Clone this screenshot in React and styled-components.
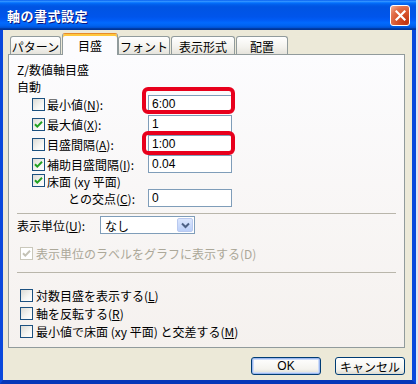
import React from 'react'
import styled, { createGlobalStyle } from 'styled-components'

const GlobalStyle = createGlobalStyle`
	html, body {
		margin: 0;
		padding: 0;
		background: #dde5f2;
	}
	body {
		font-family: "Liberation Sans", "Noto Sans CJK JP", sans-serif;
		font-size: 12px;
		color: #000;
	}
	* { box-sizing: border-box; }
`

const tabs = [
	{ label: 'パターン', width: 51, gap: 0 },
	{ label: '目盛', width: 56, gap: 1, active: true },
	{ label: 'フォント', width: 52, gap: 0 },
	{ label: '表示形式', width: 64, gap: 1 },
	{ label: '配置', width: 52, gap: 1 },
]

const Check = ({ checked, disabled }) => (
	<CheckBox disabled={disabled}>
		{checked && (
			<svg width='9' height='9' viewBox='0 0 9 9'>
				<path d='M1 4.2 L3.3 6.6 L8 1.8' fill='none'
				      stroke={disabled ? '#c4c2b6' : '#21a121'} strokeWidth='2'/>
			</svg>
		)}
	</CheckBox>
)

const Key = ({ children }) => <u>{children}</u>

export default function App () {
	return (
		<>
			<GlobalStyle/>
			<Window>
				<TitleBar>
					<Title>軸の書式設定</Title>
					<CloseButton>
						<svg width='11' height='11' viewBox='0 0 11 11'>
							<path d='M1.5 1.5 L9.5 9.5 M9.5 1.5 L1.5 9.5' stroke='#fff' strokeWidth='2.2' strokeLinecap='square'/>
						</svg>
					</CloseButton>
				</TitleBar>
				<Frame>
					<TabRow>
						{tabs.map(t => (
							<Tab key={t.label} width={t.width} gap={t.gap} active={t.active}>{t.label}</Tab>
						))}
					</TabRow>
					<Panel>
						<Heading>Z/数値軸目盛</Heading>
						<AutoLabel>自動</AutoLabel>
						<FieldRow>
							<Check/>
							<FieldLabel>最小値(<Key>N</Key>):</FieldLabel>
							<InputWrap>
								<Input>6:00</Input>
								<Highlight top={-8} left={-6} right={-3} bottom={-1}/>
							</InputWrap>
						</FieldRow>
						<FieldRow>
							<Check checked/>
							<FieldLabel>最大値(<Key>X</Key>):</FieldLabel>
							<InputWrap><Input>1</Input></InputWrap>
						</FieldRow>
						<FieldRow>
							<Check/>
							<FieldLabel>目盛間隔(<Key>A</Key>):</FieldLabel>
							<InputWrap>
								<Input>1:00</Input>
								<Highlight top={-4} left={-6} right={-3} bottom={-2}/>
							</InputWrap>
						</FieldRow>
						<FieldRow>
							<Check checked/>
							<FieldLabel>補助目盛間隔(<Key>I</Key>):</FieldLabel>
							<InputWrap><Input>0.04</Input></InputWrap>
						</FieldRow>
						<FloorRow>
							<Check checked/>
							<FloorLabel>
								<Line>床面 (xy 平面)</Line>
								<Line indent>との交点(<Key>C</Key>):</Line>
							</FloorLabel>
							<FloorInput>0</FloorInput>
						</FloorRow>

						<Separator gap={6}/>

						<UnitRow>
							<UnitLabel>表示単位(<Key>U</Key>):</UnitLabel>
							<Select>
								<SelectValue>なし</SelectValue>
								<DropButton>
									<svg width='9' height='7' viewBox='0 0 9 7'>
										<path d='M1 1.5 L4.5 5 L8 1.5' fill='none' stroke='#4d6185' strokeWidth='2'/>
									</svg>
								</DropButton>
							</Select>
						</UnitRow>
						<OptionRow gap={9}>
							<Check checked disabled/>
							<OptionText disabled>表示単位のラベルをグラフに表示する(D)</OptionText>
						</OptionRow>

						<Separator gap={10}/>

						<OptionRow gap={13}>
							<Check/>
							<OptionText>対数目盛を表示する(<Key>L</Key>)</OptionText>
						</OptionRow>
						<OptionRow>
							<Check/>
							<OptionText>軸を反転する(<Key>R</Key>)</OptionText>
						</OptionRow>
						<OptionRow>
							<Check/>
							<OptionText>最小値で床面 (xy 平面) と交差する(<Key>M</Key>)</OptionText>
						</OptionRow>
					</Panel>
					<ButtonRow>
						<Button primary>OK</Button>
						<Button>キャンセル</Button>
					</ButtonRow>
				</Frame>
			</Window>
		</>
	)
}

const Window = styled.div`
	width: 416px;
	height: 384px;
	display: flex;
	flex-direction: column;
	background: #ece9d8;
`

const TitleBar = styled.div`
	height: 30px;
	flex: none;
	display: flex;
	align-items: center;
	padding: 0 6px 0 7px;
	background: linear-gradient(to bottom,
		#0058ee 0%, #3593ff 4%, #288eff 6%, #127dff 8%, #036ffc 10%,
		#0262ee 14%, #0057e5 20%, #0054e3 24%, #0055eb 56%, #005bf5 66%,
		#026afe 76%, #0062ef 86%, #0052d6 92%, #0040ab 94%, #003092 100%);
`

const Title = styled.div`
	color: #fff;
	font-family: "Noto Sans CJK JP", sans-serif;
	font-weight: bold;
	font-size: 13px;
	letter-spacing: 0.5px;
	text-shadow: 1px 1px 0 #0a1883;
`

const CloseButton = styled.div`
	margin-left: auto;
	width: 20px;
	height: 21px;
	border: 1px solid #fff;
	border-radius: 3px;
	display: flex;
	align-items: center;
	justify-content: center;
	background: radial-gradient(circle at 85% 85%, #c1330f 0%, #d8542c 45%, #e2714c 70%, #f5b39c 100%);
`

const Frame = styled.div`
	flex: 1;
	display: flex;
	flex-direction: column;
	padding-left: 5px;
	border-left: 3px solid #0a48dc;
	border-right: 4px solid #0a48dc;
	border-bottom: 4px solid #0637b8;
`

const TabRow = styled.div`
	margin-top: 3px;
	height: 21px;
	display: flex;
	align-items: flex-end;
	padding-left: 2px;
	position: relative;
	z-index: 1;
`

const Tab = styled.div`
	width: ${p => p.width}px;
	margin-left: ${p => p.gap}px;
	height: ${p => p.active ? 22 : 18}px;
	margin-bottom: ${p => p.active ? -1 : 0}px;
	display: flex;
	align-items: center;
	justify-content: center;
	padding-top: 1px;
	font-family: "Noto Sans CJK JP", sans-serif;
	font-size: 12px;
	border: 1px solid #919b9c;
	border-bottom: none;
	border-radius: 3px 3px 0 0;
	${p => p.active ? `
		background: #fcfcfe;
		border-top: 1px solid #e68b2c;
		box-shadow: inset 0 2px 0 #ffc73c;
	` : `
		background: linear-gradient(#ffffff, #f3f2ed 60%, #e5e3dc);
	`}
`

const Panel = styled.div`
	width: 397px;
	height: 294px;
	flex: none;
	border: 1px solid #919b9c;
	background: linear-gradient(#fcfcfe, #f5f1ee);
	padding: 7px 8px 0 8px;
	display: flex;
	flex-direction: column;
	font-family: "Noto Sans CJK JP", sans-serif;
`

const Heading = styled.div`
	line-height: 16px;
`

const AutoLabel = styled.div`
	margin-top: 2px;
	line-height: 14px;
`

const FieldRow = styled.div`
	height: 20px;
	display: flex;
	align-items: center;
	padding-left: 15px;
`

const CheckBox = styled.div`
	width: 13px;
	height: 13px;
	flex: none;
	display: flex;
	align-items: center;
	justify-content: center;
	border: 1px solid ${p => p.disabled ? '#cac8bb' : '#1c5180'};
	background: ${p => p.disabled ? '#fff' : 'linear-gradient(135deg, #dcdbd5, #f6f6f3 60%, #fff)'};
`

const FieldLabel = styled.div`
	width: 101px;
	margin-left: 2px;
	white-space: nowrap;
`

const InputWrap = styled.div`
	position: relative;
`

const Input = styled.div`
	width: 84px;
	height: 18px;
	border: 1px solid #7f9db9;
	background: #fff;
	padding-left: 3px;
	display: flex;
	align-items: center;
	font-family: "Liberation Sans", sans-serif;
`

const Highlight = styled.div`
	position: absolute;
	top: ${p => p.top}px;
	left: ${p => p.left}px;
	right: ${p => p.right}px;
	bottom: ${p => p.bottom}px;
	border: 4px solid #e8001c;
	border-radius: 6px;
`

const FloorRow = styled.div`
	height: 33px;
	display: flex;
	align-items: flex-start;
	padding-left: 15px;
`

const FloorLabel = styled.div`
	width: 101px;
	margin-left: 2px;
	margin-top: -1px;
	white-space: nowrap;
`

const Line = styled.div`
	line-height: 17px;
	padding-left: ${p => p.indent ? 21 : 0}px;
`

const FloorInput = styled(Input)`
	margin-top: 15px;
`

const Separator = styled.div`
	margin-top: ${p => p.gap}px;
	height: 1px;
	flex: none;
	background: #b9b6ab;
`

const UnitRow = styled.div`
	margin-top: 1px;
	height: 20px;
	display: flex;
	align-items: center;
`

const UnitLabel = styled.div`
	width: 83px;
`

const Select = styled.div`
	width: 95px;
	height: 18px;
	border: 1px solid #7f9db9;
	background: #fff;
	display: flex;
	align-items: center;
	padding: 1px;
`

const SelectValue = styled.div`
	flex: 1;
	padding-left: 3px;
`

const DropButton = styled.div`
	width: 16px;
	height: 14px;
	border: 1px solid #b9c9ef;
	border-radius: 2px;
	display: flex;
	align-items: center;
	justify-content: center;
	background: linear-gradient(#dbe6fd, #bcd0f9);
`

const OptionRow = styled.div`
	margin-top: ${p => p.gap || 0}px;
	height: 18px;
	display: flex;
	align-items: center;
	padding-left: 3px;
`

const OptionText = styled.div`
	margin-left: 3px;
	white-space: nowrap;
	color: ${p => p.disabled ? '#aca899' : '#000'};
`

const ButtonRow = styled.div`
	margin-top: 9px;
	display: flex;
	justify-content: flex-end;
	gap: 14px;
	padding-right: 7px;
`

const Button = styled.div`
	width: 70px;
	height: 18px;
	display: flex;
	align-items: center;
	justify-content: center;
	font-family: "Liberation Sans", "Noto Sans CJK JP", sans-serif;
	font-size: 12px;
	border: 1px solid #003c74;
	border-radius: 3px;
	background: linear-gradient(#ffffff, #f4f3ee 70%, #dcdad1);
	box-shadow: ${p => p.primary ? 'inset 0 0 0 1px #9cb7ef, inset 0 0 0 2px #cddcf8' : 'none'};
`
